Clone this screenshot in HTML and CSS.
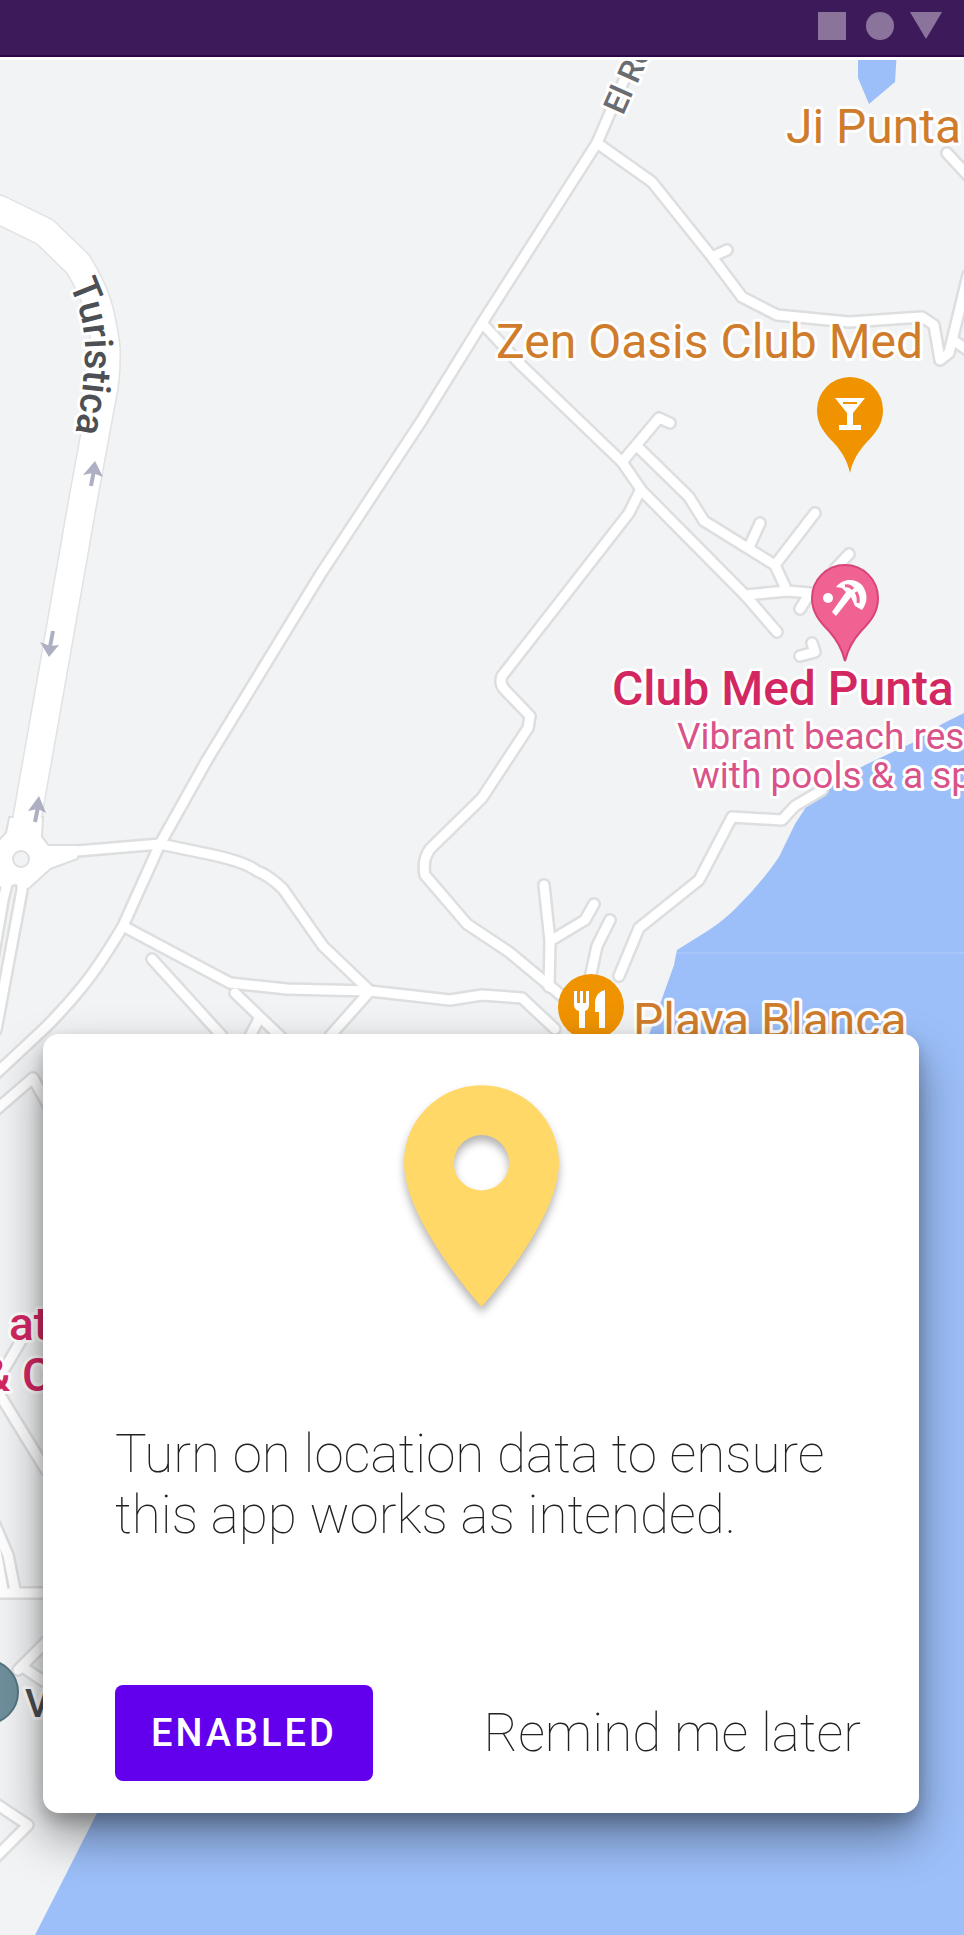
FILE: index.html
```html
<!DOCTYPE html>
<html lang="en">
<head>
<meta charset="utf-8">
<meta name="viewport" content="width=device-width, initial-scale=1">
<title>Location</title>
<link rel="stylesheet" href="styles.css">
</head>
<body>
<header class="status-bar">
  <svg class="status-icon" viewBox="0 0 28 28" aria-hidden="true"><path d="M0 0h28v28H0z"/></svg>
  <svg class="status-icon" viewBox="0 0 28 28" aria-hidden="true"><circle cx="14" cy="14" r="14"/></svg>
  <svg class="status-icon status-icon-wide" viewBox="0 0 32 28" aria-hidden="true"><path d="M0 0h32L16 27z"/></svg>
</header>
<main class="screen">
  <svg class="map" viewBox="0 57 964 1878" preserveAspectRatio="xMidYMin slice" role="img" aria-label="Map">
    <defs>
      <path id="turistica" d="M69 284Q86 320 85 355Q84 390 73 446"/>
      <path id="major-roads" d="M-20 202L0 210L45 232L78 264Q94 290 99 310Q107 345 106 355Q106 380 102 397L83 500L55 660L25 830"/>
      <path id="roundabout" d="M10 818L7 833L-5 846V882L3 888L15 884L28 888L50 868L77 858V846L48 846L41 837L42 818z"/>
      <g id="roads">
        <path d="M634 57L597 143L482 323L422 420L320 575L207 760L160 844L123 926Q100 965 82 987Q65 1008 45 1028L0 1070L-20 1088"/>
        <path d="M22 880V890L-4 1030M8 880L3 900L-14 1000"/>
        <path d="M60 852L77 851L160 844L213 855Q245 862 257 871Q270 876 283 889L323 946L370 991L330 1036"/>
        <path d="M123 926L230 983L287 989L370 991L450 1000L482 995L522 998L555 1029"/>
        <path d="M152 959L222 1036M235 993L260 1017L284 1040M260 1017L250 1036"/>
        <path d="M597 143L652 182L712 257L742 297L777 315L849 322L922 317L934 325L940 360L949 353L968 275M712 257L727 250M953 340L970 352M947 153L972 180"/>
        <path d="M482 323L519 363L622 462L642 491L745 595L777 632"/>
        <path d="M622 462L659 418L670 423M639 448L689 497L704 521L775 565L787 591L745 595M787 591L810 593L800 609M750 545L760 523M775 565L815 513M835 569L849 554M800 656L815 652L812 643"/>
        <path d="M640 491L629 513L502 676Q499 684 505 690L530 716L528 728L482 798L430 849Q422 860 425 875L467 924L509 952L562 996"/>
        <path d="M549 987L550 941L544 885M550 941L585 920L594 904M590 978L597 946L610 920M619 976L639 928L699 880L732 817L782 820L795 806L822 790"/>
        <path d="M-10 1115L33 1078L48 1105M-5 1387L46 1470M5 1368L22 1339M-5 1525L8 1555L15 1590M-5 1545L3 1590M-5 1593H50M18 1670L48 1640M24 1668L48 1684M-5 1803L28 1825L-5 1858"/>
      </g>
      <path id="pin-shape" d="M0 63C-3 50-8 42-16 33C-26 23-33 14-33 0A33 33 0 0 1 33 0C33 14 26 23 16 33C8 42 3 50 0 63Z"/>
    </defs>
    <path class="land" d="M0 0H964V1935H0z"/>
    <path class="water" d="M970 710L942 724L912 743L865 765L830 785L812 798L795 824L779 857Q760 885 735 909Q724 920 709 930L677 950L674 965L649 1035V1300L300 1700L97 1813L60 1886L35 1935H970zM858 50H897L895 82L869 104L858 78z"/>
    <path class="seam" d="M677 953H964"/>
    <use class="major-casing" href="#major-roads"/>
    <use class="roundabout-casing" href="#roundabout"/>
    <use class="casing" href="#roads"/>
    <use class="major-fill" href="#major-roads"/>
    <use class="roundabout" href="#roundabout"/>
    <use class="fill" href="#roads"/>
    <circle class="island" cx="21" cy="859" r="8"/>
    <g class="arrows">
      <path d="M91 486L95 465"/><path class="arrow-head" d="M83 475L95 461L103 477L93 473z"/>
      <path d="M53 631L49 652"/><path class="arrow-head" d="M40 642L49 657L59 645L50 646z"/>
      <path d="M35 822L39 802"/><path class="arrow-head" d="M28 811L39 796L46 813L38 809z"/>
    </g>
    <g class="label">
      <text class="road-name"><textPath href="#turistica">Turistica</textPath></text>
      <text class="road-name road-name-small" transform="translate(623 116) rotate(-66)">El Ro</text>
      <text class="place" x="786" y="143">Ji Punta</text>
      <text class="place" x="496" y="358">Zen Oasis Club Med</text>
      <text class="place" x="633" y="1037">Playa Blanca</text>
      <text class="resort" x="612" y="705">Club Med Punta</text>
      <text class="tagline" x="677" y="749">Vibrant beach resort</text>
      <text class="tagline" x="692" y="788">with pools &amp; a spa</text>
      <text class="resort resort-small" x="9" y="1340">at</text>
      <text class="resort resort-small" x="-19" y="1391">&amp; C</text>
      <text class="road-name" x="25" y="1717">V</text>
    </g>
    <g transform="translate(850 410)">
      <use class="pin-orange" href="#pin-shape"/>
      <path class="glyph" d="M-15-12H15L3 3V15H11V20H-11V15H-3V3z"/>
      <path class="glyph-line" d="M-7-7H7"/>
    </g>
    <g transform="translate(845 598)">
      <use class="pin-pink" href="#pin-shape"/>
      <circle class="glyph" cx="-17" cy="0" r="5"/>
      <path class="glyph" d="M-9-11C-2-20 10-20 17-13C23-5 23 4 17 12L10 8L6-1L-9 18L-13 14L1-6L-3-10z"/>
      <path class="glyph-gap" d="M0-12Q5-13 8-9M11-6Q14-1 13 5"/>
    </g>
    <g transform="translate(591 1007)">
      <circle class="pin-orange" r="33"/>
      <path class="glyph" d="M-17-16h3V-4h3v-12h3V-4h3v-12h3V-3Q-2 3-6 4V21h-6V4Q-17 3-17-3zM14-17V21H8V5H4V-5Q5-15 14-17z"/>
    </g>
    <circle class="pin-slate" cx="-14" cy="1692" r="32"/>
  </svg>
  <section class="card" role="dialog" aria-labelledby="prompt">
    <svg class="card-pin" viewBox="5 2 14 20" aria-hidden="true"><path fill-rule="evenodd" d="M12 2C8.13 2 5 5.13 5 9c0 5.25 7 13 7 13s7-7.75 7-13c0-3.87-3.13-7-7-7zm0 9.500a2.500 2.500 0 1 1 0-5a2.500 2.500 0 0 1 0 5z"/></svg>
    <p class="prompt" id="prompt">Turn on location data to ensure this app works as intended.</p>
    <div class="actions">
      <button class="primary" type="button">ENABLED</button>
      <button class="secondary" type="button">Remind me later</button>
    </div>
  </section>
</main>
</body>
</html>
```
FILE: styles.css
```css
* {
  box-sizing: border-box;
}

body {
  display: flex;
  flex-direction: column;
  min-height: 100vh;
  margin: 0;
  font-family: Roboto, "Liberation Sans", sans-serif;
}

.status-bar {
  display: flex;
  justify-content: flex-end;
  align-items: flex-start;
  gap: 20px;
  height: 57px;
  padding: 12px 22px 0 0;
  background: #3d1b5a;
  border-bottom: 2px solid #2c0648;
}

.status-icon {
  width: 28px;
  height: 28px;
  fill: #8b749c;
}

.status-icon-wide {
  width: 32px;
  margin-left: -4px;
}

.screen {
  position: relative;
  display: flex;
  flex: 1;
  flex-direction: column;
  justify-content: flex-end;
  padding: 48px 45px 122px 43px;
  overflow: hidden;
  border-top: 3px solid #fff;
}

.map {
  position: absolute;
  inset: -3px 0 0;
  width: 100%;
  height: calc(100% + 3px);
}

.land { fill: #f1f3f4; }
.water { fill: #9cbff9; }
.seam { stroke: #b2cdfa; stroke-width: 1; }

.casing,
.fill,
.major-casing,
.major-fill {
  fill: none;
  stroke-linecap: round;
  stroke-linejoin: round;
}

.casing { stroke: #dcdee0; stroke-width: 14; }
.fill { stroke: #fff; stroke-width: 9; }
.major-casing { stroke: #e0e2e3; stroke-width: 30; }
.major-fill { stroke: #fff; stroke-width: 27; }
.roundabout { fill: #fff; }
.roundabout-casing { fill: #dcdee0; stroke: #dcdee0; stroke-width: 4; }
.island { fill: #f1f3f4; stroke: #dcdee0; stroke-width: 2; }

.arrows {
  fill: none;
  stroke: #adafc3;
  stroke-width: 4;
}

.arrow-head {
  fill: #adafc3;
  stroke: none;
}

.label {
  paint-order: stroke;
  stroke: #fff;
  stroke-width: 6px;
  stroke-linejoin: round;
}

.road-name { fill: #4c4f53; font-size: 39px; font-weight: 500; }
.road-name-small { fill: #696c70; font-size: 32px; }
.place { fill: #cf7d2c; font-size: 48px; }
.resort { fill: #d32762; font-size: 48px; font-weight: 500; }
.resort-small { font-size: 46px; }
.tagline { fill: #d9538a; font-size: 37px; }

.pin-orange { fill: #f09300; }
.pin-pink { fill: #f06292; stroke: #d8437a; stroke-width: 2; }
.pin-slate { fill: #6f8f9c; stroke: #567582; stroke-width: 2; }
.glyph { fill: #fff; }
.glyph-line { stroke: #f09300; stroke-width: 2; }
.glyph-gap { fill: none; stroke: #f06292; stroke-width: 3; }

.card {
  position: relative;
  display: flex;
  flex-direction: column;
  padding: 51px 72px 32px;
  background: #fff;
  border-radius: 16px;
  box-shadow: 0 24px 48px rgba(0, 0, 0, 0.4), 0 8px 16px rgba(0, 0, 0, 0.2);
}

.card-pin {
  align-self: center;
  width: 155px;
  height: 222px;
  overflow: visible;
  fill: #ffd868;
  filter: drop-shadow(0 6px 4px rgba(0, 0, 0, 0.3));
}

.prompt {
  margin: 117px 0 139px;
  color: #212121;
  font-size: 53px;
  font-weight: 100;
  line-height: 61px;
}

.actions {
  display: flex;
  justify-content: space-between;
  align-items: center;
  gap: 24px;
  margin-right: -14px;
}

.primary,
.secondary {
  border: 0;
  font-family: inherit;
}

.primary {
  height: 96px;
  padding: 0 36px;
  color: #fff;
  background: #6200ee;
  border-radius: 8px;
  font-size: 38px;
  font-weight: 500;
  letter-spacing: 3px;
}

.secondary {
  padding: 0;
  color: #212121;
  background: none;
  font-size: 53px;
  font-weight: 100;
}
```
